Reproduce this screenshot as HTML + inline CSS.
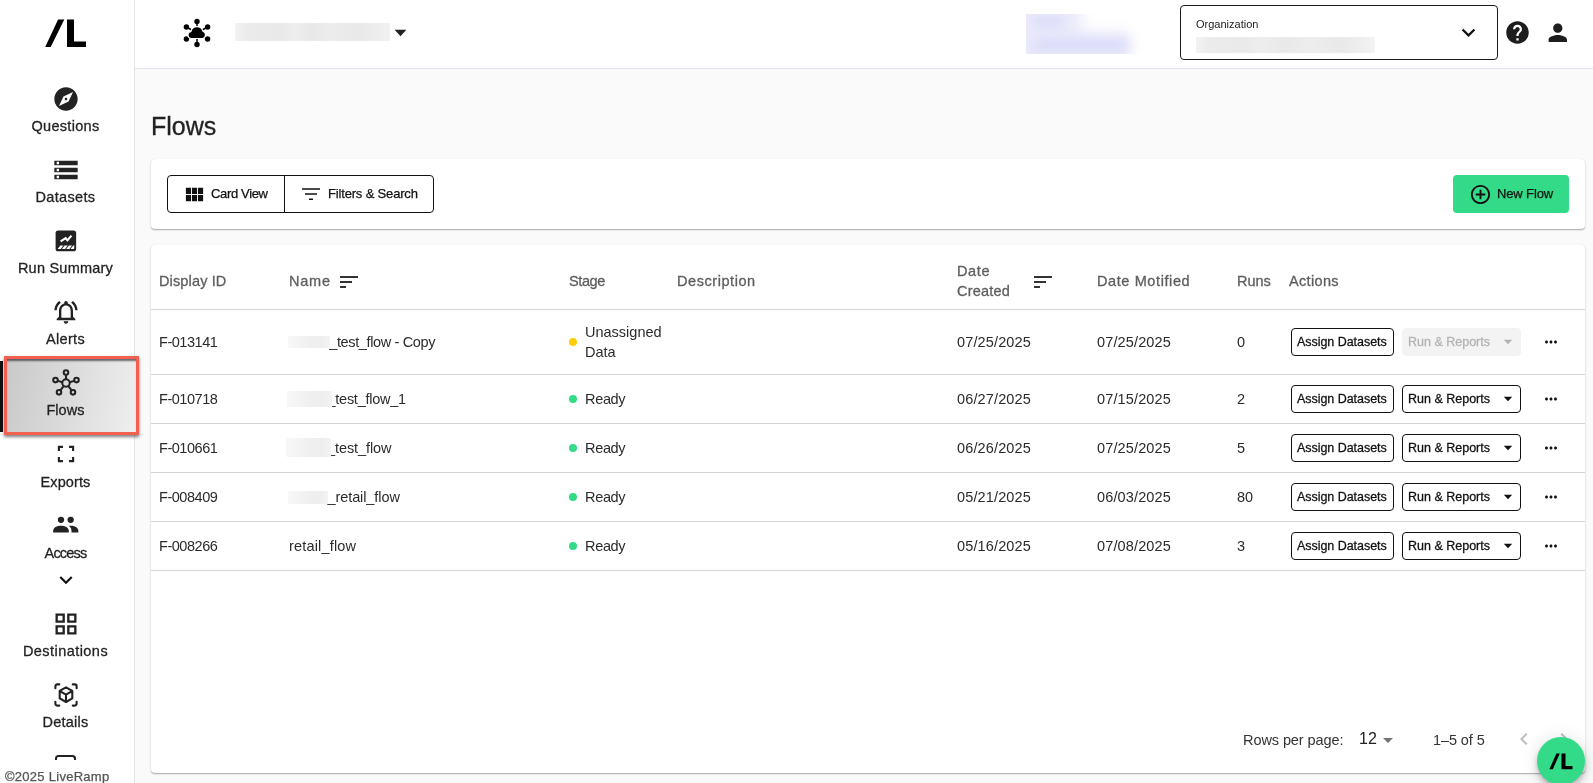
<!DOCTYPE html>
<html lang="en">
<head>
<meta charset="utf-8">
<title>Flows</title>
<style>
*{box-sizing:border-box;margin:0;padding:0}
html,body{width:1593px;height:783px;overflow:hidden;background:#fafafa;font-family:"Liberation Sans",sans-serif;color:#212121}
.abs{position:absolute}
#main,#side,#head{will-change:transform}
#side{position:absolute;left:0;top:0;width:135px;height:783px;background:#fff;border-right:1px solid #e4e4e4}
#head{position:absolute;left:135px;top:0;width:1458px;height:69px;background:#fff;border-bottom:1px solid #e1e4ed}
.nav{position:absolute;left:0;width:131px;text-align:center;font-size:14.5px;color:#222}
.nav svg{position:absolute;left:52px;top:0;width:28px;height:28px;fill:#222}
.nav span{position:absolute;left:0;width:131px;top:32px;line-height:18px;-webkit-text-stroke:.28px #222}
.card{position:absolute;background:#fff;border-radius:4px;box-shadow:0 1px 1.500px rgba(0,0,0,.33),0 0 1px rgba(0,0,0,.1)}
.t{position:absolute;white-space:nowrap;font-size:14.5px;line-height:20px;color:#2b2b2b}
.h{color:#5e5e5e;-webkit-text-stroke:.3px #5e5e5e}
.line{position:absolute;left:151px;width:1434px;height:1px;background:#d4d4d4}
.btn{position:absolute;height:28px;border:1px solid #111;border-radius:4px;font-size:12.5px;line-height:26px;color:#111;white-space:nowrap;background:#fff}
.sb{-webkit-text-stroke:.28px #111}
.dot{position:absolute;width:8px;height:8px;border-radius:50%;background:#33db88}
.blur{position:absolute;background:#ececec;filter:blur(2px);border-radius:2px}
</style>
</head>
<body>
<div id="side">
<svg class="abs" style="left:44px;top:18px" width="44" height="30" viewBox="0 0 44 30"><path d="M14.100 1.600h6.200L6.700 29H1.200z M23 1.600h7v21.900h12v5.500H23z" fill="#000"/></svg>

<div class="nav" style="top:84.7px"><svg viewBox="0 0 24 24"><path d="M12 10.9c-.61 0-1.1.49-1.1 1.1s.49 1.1 1.1 1.1c.61 0 1.1-.49 1.1-1.1s-.49-1.1-1.1-1.1zM12 2C6.48 2 2 6.48 2 12s4.48 10 10 10 10-4.48 10-10S17.52 2 12 2zm2.19 12.19L6 18l3.810-8.190L18 6l-3.810 8.190z"/></svg><span id="n0" style="letter-spacing:0.30px">Questions</span></div>

<div class="nav" style="top:155.8px"><svg viewBox="0 0 24 24"><path d="M2 20h20v-4H2v4zm2-3h2v2H4v-2zM2 4v4h20V4H2zm4 3H4V5h2v2zm-4 7h20v-4H2v4zm2-3h2v2H4v-2z"/></svg><span id="n1" style="letter-spacing:0.34px">Datasets</span></div>

<div class="nav" style="top:226.9px"><svg viewBox="0 0 24 24"><rect x="3.100" y="3.100" width="17.600" height="17.700" rx="2.200"/><path d="M7.400 12.400l4.300-2.900 1.500 1.900 3.500-4" fill="none" stroke="#fff" stroke-width="1.800"/><path d="M4.800 18.800l2.300-2.900h2.700l-2.300 2.900zM8.500 18.800l2.300-2.900h2.700l-2.300 2.900zM12.200 18.800l2.300-2.900h2.700l-2.300 2.900zM15.900 18.800l2.300-2.900h.900v2.300l-.500.600z" fill="#fff"/></svg><span id="n2" style="letter-spacing:0.23px">Run Summary</span></div>

<div class="nav" style="top:298px"><svg viewBox="0 0 24 24"><path d="M12 22c1.1 0 2-.9 2-2h-4c0 1.1.9 2 2 2zm6-6v-5c0-3.070-1.630-5.640-4.500-6.320V4c0-.83-.67-1.500-1.500-1.500s-1.500.67-1.500 1.500v.68C7.640 5.360 6 7.920 6 11v5l-2 2v1h16v-1l-2-2zm-2 1H8v-6c0-2.480 1.510-4.500 4-4.500s4 2.020 4 4.500v6zM7.580 4.080L6.150 2.650C3.750 4.480 2.170 7.300 2.030 10.500h2c.15-2.650 1.510-4.970 3.550-6.420zm12.390 6.420h2c-.15-3.200-1.730-6.020-4.120-7.850l-1.420 1.430c2.020 1.450 3.390 3.770 3.540 6.420z"/></svg><span id="n3" style="letter-spacing:0.36px">Alerts</span></div>

<div class="abs" style="left:0;top:361px;width:3px;height:71px;background:#111"></div>
<div class="abs" style="left:4px;top:356px;width:135px;height:79px;border:3px solid #f4604f;background:linear-gradient(100deg,#c9c9c9 0%,#dcdcdc 50%,#efefef 100%);box-shadow:0 2px 3px rgba(0,0,0,.5),inset 0 3px 2px -1px rgba(0,0,0,.55);z-index:5"></div>
<div class="nav" style="top:369.1px;z-index:6"><svg viewBox="0 0 24 24" style="fill:none" stroke="#222" stroke-width="1.750"><circle cx="12" cy="12" r="3.200"/><circle cx="12" cy="3" r="1.950"/><circle cx="3" cy="9.500" r="1.950"/><circle cx="21" cy="9.500" r="1.950"/><circle cx="6" cy="20" r="1.950"/><circle cx="18" cy="20" r="1.950"/><path d="M12 5.200v3.500M5.100 10.200l3.800 1.200M18.900 10.200l-3.800 1.200M7.300 18.200l2.700-3.600M16.700 18.200l-2.700-3.600"/></svg><span id="n4" style="letter-spacing:0.05px">Flows</span></div>

<div class="nav" style="top:440.2px"><svg viewBox="0 0 24 24"><path d="M5 5h4.400v1.800H6.800v2.600H5zM14.600 5H19v4.400h-1.800V6.800h-2.600zM5 14.600h1.800v2.600h2.600V19H5zM17.200 14.600H19V19h-4.400v-1.800h2.600z"/></svg><span id="n5" style="top:32.600px;letter-spacing:0.10px">Exports</span></div>

<div class="nav" style="top:511.2px"><svg viewBox="0 0 24 24"><circle cx="7.700" cy="7.600" r="2.700"/><circle cx="16" cy="7.600" r="2.700"/><path d="M1 18.400v-1.300c0-3 3.300-4.500 6.700-4.500s6.700 1.500 6.700 4.500v1.300z"/><path d="M16.700 18.400v-1.500c0-1.700-.8-3.100-2.200-4.100.5-.1 1-.2 1.500-.2 3.300 0 6.600 1.500 6.600 4.500v1.300z"/></svg><span id="n6" style="top:32.600px;letter-spacing:-0.80px">Access</span></div>
<svg class="abs" style="left:52.800px;top:567.100px" width="26" height="26" viewBox="0 0 24 24"><path d="M16.590 8.590L12 13.170 7.410 8.590 6 10l6 6 6-6z" fill="#111"/></svg>

<div class="nav" style="top:610px"><svg viewBox="0 0 24 24"><path d="M3 3v8h8V3H3zm6 6H5V5h4v4zm-6 4v8h8v-8H3zm6 6H5v-4h4v4zm4-16v8h8V3h-8zm6 6h-4V5h4v4zm-6 4v8h8v-8h-8zm6 6h-4v-4h4v4z"/></svg><span id="n7" style="letter-spacing:0.45px">Destinations</span></div>

<div class="nav" style="top:681px"><svg viewBox="0 0 24 24" style="fill:none" stroke="#222" stroke-width="1.800" stroke-linecap="round" stroke-linejoin="round"><path d="M2.900 6.200V4.400A1.500 1.500 0 0 1 4.400 2.900H6.200M17.800 2.900h1.800a1.500 1.500 0 0 1 1.500 1.500v1.800M21.100 17.800v1.800a1.500 1.500 0 0 1-1.500 1.500h-1.800M6.200 21.100H4.400a1.500 1.500 0 0 1-1.500-1.500v-1.800"/><path d="M12 5.400l5.400 3.100v6.400L12 18l-5.400-3.100V8.500zM6.800 8.700l5.200 3 5.200-3M12 11.700V18"/></svg><span id="n8" style="letter-spacing:0.27px">Details</span></div>

<div class="abs" style="left:54.800px;top:755px;width:21.600px;height:8px;border:2.500px solid #222;border-bottom:none;border-radius:3.500px 3.500px 0 0"></div>
<div class="abs" style="left:0;top:759.500px;width:134px;height:24px;background:#fff"></div>
<div class="abs" id="foot" style="letter-spacing:0.27px;left:5px;top:769px;font-size:13px;line-height:16px;color:#555;-webkit-text-stroke:.25px #555;white-space:nowrap">©2025 LiveRamp</div>
</div>
<div id="head">
<svg class="abs" style="left:47px;top:18px" width="30" height="30" viewBox="0 0 30 30" fill="#000" stroke="#000"><g stroke-width="1.500"><path d="M15 15V3.500M15 15l9.600-5.500M15 15l9.600 5.500M15 15v11.500M15 15l-9.600 5.500M15 15L5.400 9.500"/></g><g stroke="none"><circle cx="15" cy="3.500" r="2.700"/><circle cx="25.600" cy="9" r="2.700"/><circle cx="25.600" cy="21" r="2.700"/><circle cx="15" cy="26.500" r="2.700"/><circle cx="4.400" cy="21" r="2.700"/><circle cx="4.400" cy="9" r="2.700"/><path d="M9.500 20.500a3.500 3.500 0 0 1-.6-6.950 6.200 6.200 0 0 1 12-.400 3.800 3.800 0 0 1-.400 7.350z" stroke="#fff" stroke-width="1.200"/></g></svg>
<div class="abs" style="left:99.700px;top:23px;width:155.300px;height:17.700px;background:linear-gradient(90deg,#f3f3f3 0%,#ebebeb 8%,#e9e9e9 30%,#eeeeee 38%,#e8e8e8 50%,#ececec 62%,#e9e9e9 80%,#eeeeee 94%,#f2f2f2 100%)"></div>
<svg class="abs" style="left:259px;top:29px" width="13" height="8" viewBox="0 0 13 8"><path d="M.6.800h11.800L6.500 7.200z" fill="#222"/></svg>
<div class="abs" style="left:891px;top:14px;width:126px;height:40px;overflow:hidden">
<div class="abs" style="left:-14px;top:-12px;width:70px;height:64px;background:#ebebfb;filter:blur(7px)"></div>
<div class="abs" style="left:-8px;top:18px;width:112px;height:34px;background:#ebebfb;filter:blur(7px)"></div>
<div class="abs" style="left:7px;top:2px;width:30px;height:11px;background:#dcdcf9;filter:blur(5px)"></div>
<div class="abs" style="left:7px;top:25px;width:94px;height:12px;background:#d9d9f9;filter:blur(6px)"></div>
</div>
<div class="abs" style="left:1045px;top:5px;width:318px;height:55px;border:1px solid #1a1a1a;border-radius:4px"></div>
<div class="abs" id="org" style="left:1061px;top:17px;font-size:11px;line-height:14px;color:#222">Organization</div>
<div class="abs" style="left:1061px;top:37px;width:179px;height:15.600px;background:linear-gradient(90deg,#f2f2f2 0%,#ebebeb 8%,#eaeaea 28%,#eeeeee 36%,#e9e9e9 50%,#ededed 64%,#e9e9e9 82%,#efefef 93%,#f4f4f4 100%)"></div>
<svg class="abs" style="left:1320px;top:19px" width="27" height="27" viewBox="0 0 24 24"><path d="M16.590 8.590L12 13.170 7.410 8.590 6 10l6 6 6-6z" fill="#111"/></svg>
<svg class="abs" style="left:1369px;top:19px" width="27" height="27" viewBox="0 0 24 24"><path d="M12 2C6.480 2 2 6.480 2 12s4.480 10 10 10 10-4.480 10-10S17.520 2 12 2zm1 17h-2v-2h2v2zm2.070-7.750l-.9.920C13.450 12.900 13 13.500 13 15h-2v-.5c0-1.100.45-2.100 1.170-2.830l1.240-1.260c.37-.36.59-.86.59-1.410 0-1.100-.9-2-2-2s-2 .9-2 2H8c0-2.210 1.790-4 4-4s4 1.790 4 4c0 .88-.36 1.680-.93 2.250z" fill="#1e1e1e"/></svg>
<svg class="abs" style="left:1409px;top:19px" width="27.600" height="27.600" viewBox="0 0 24 24"><path d="M12 12c2.210 0 4-1.790 4-4s-1.790-4-4-4-4 1.790-4 4 1.790 4 4 4zm0 2c-2.670 0-8 1.340-8 4v2h16v-2c0-2.660-5.330-4-8-4z" fill="#1e1e1e"/></svg>
</div>
<div id="main">
<div class="t" id="title" style="left:151px;top:110px;font-size:25px;line-height:32px;color:#222;-webkit-text-stroke:.3px #222">Flows</div>
<div class="card" style="left:151px;top:159px;width:1434px;height:70px"></div>
<div class="abs" style="left:167px;top:175px;width:267px;height:38px;border:1px solid #111;border-radius:4px"></div>
<div class="abs" style="left:284px;top:175px;width:1px;height:38px;background:#111"></div>
<svg class="abs" style="left:183px;top:183px" width="23" height="23" viewBox="0 0 24 24"><path d="M14.670 5v6.500H9.330V5h5.340zm1 6.500H21V5h-5.330v6.500zm-1 7.500v-6.500H9.330V19h5.340zm1-6.500V19H21v-6.500h-5.330zm-7.340 0H3V19h5.330v-6.500zm0-1V5H3v6.500h5.330z" fill="#111"/></svg>
<div class="t" id="cv" style="left:211px;top:184px;font-size:13px;color:#111;-webkit-text-stroke:.25px #111;letter-spacing:-0.34px">Card View</div>
<svg class="abs" style="left:299px;top:182px" width="24" height="24" viewBox="0 0 24 24"><path d="M10 18h4v-1.600h-4V18zM3 6.200v1.500h18V6.200H3zm3 6.500h12v-1.500H6v1.500z" fill="#111"/></svg>
<div class="t" id="fs" style="left:328px;top:184px;font-size:13px;color:#111;-webkit-text-stroke:.25px #111;letter-spacing:-0.17px">Filters &amp; Search</div>
<div class="abs" style="left:1453px;top:175px;width:116px;height:38px;background:#33db88;border-radius:4px"></div>
<svg class="abs" style="left:1469px;top:182.500px" width="23" height="23" viewBox="0 0 24 24"><path d="M13 7h-2v4H7v2h4v4h2v-4h4v-2h-4V7zm-1-5C6.480 2 2 6.480 2 12s4.480 10 10 10 10-4.480 10-10S17.520 2 12 2zm0 18c-4.410 0-8-3.590-8-8s3.590-8 8-8 8 3.590 8 8-3.590 8-8 8z" fill="#111"/></svg>
<div class="t" id="nf" style="left:1497px;top:184px;font-size:13px;color:#111;-webkit-text-stroke:.25px #111;letter-spacing:-0.13px">New Flow</div>
<div class="card" style="left:151px;top:245px;width:1434px;height:528px"></div>
<div class="t h" id="h1" style="left:159px;top:271px;letter-spacing:0.14px">Display ID</div>
<div class="t h" id="h2" style="left:289px;top:271px;letter-spacing:0.77px">Name</div>
<div class="t h" id="h3" style="left:569px;top:271px;letter-spacing:-0.40px">Stage</div>
<div class="t h" id="h4" style="left:677px;top:271px;letter-spacing:0.56px">Description</div>
<div class="t h" id="h5" style="left:1097px;top:271px;letter-spacing:0.60px">Date Motified</div>
<div class="t h" id="h6" style="left:1237px;top:271px">Runs</div>
<div class="t h" id="h7" style="left:1289px;top:271px;letter-spacing:0.34px">Actions</div>
<div class="t h" id="h8" style="left:957px;top:261px;letter-spacing:0.63px">Date</div>
<div class="t h" id="h9" style="left:957px;top:281px;letter-spacing:0.20px">Created</div>
<svg class="abs" style="left:337.3px;top:269.5px" width="24" height="24" viewBox="0 0 24 24"><path d="M3 18h6v-2H3v2zM3 6v2h18V6H3zm0 7h12v-2H3v2z" fill="#333"/></svg>
<svg class="abs" style="left:1031.4px;top:269.5px" width="24" height="24" viewBox="0 0 24 24"><path d="M3 18h6v-2H3v2zM3 6v2h18V6H3zm0 7h12v-2H3v2z" fill="#333"/></svg>
<div class="line" style="top:309px"></div>
<div class="line" style="top:374px"></div>
<div class="line" style="top:423px"></div>
<div class="line" style="top:472px"></div>
<div class="line" style="top:521px"></div>
<div class="line" style="top:570px"></div>
<div class="t" id="r0a" style="left:159px;top:332px;letter-spacing:-0.46px">F-013141</div>
<div class="t" id="r0b" style="left:329.2px;top:332px;letter-spacing:-0.36px">_test_flow - Copy</div>
<div class="abs" style="left:287.5px;top:336px;width:42.2px;height:12px;background:linear-gradient(90deg,#f8f8f8,#efefef 55%,#eeeeee 80%,#f3f3f3)"></div>
<div class="dot" style="left:569px;top:338px;background:#ffcd0a"></div>
<div class="t" id="r0c" style="left:585px;top:322px">Unassigned</div>
<div class="t" id="r0c2" style="left:585px;top:342px">Data</div>
<div class="t" id="r0d" style="left:957px;top:332px;letter-spacing:0.14px">07/25/2025</div>
<div class="t" id="r0e" style="left:1097px;top:332px;letter-spacing:0.14px">07/25/2025</div>
<div class="t" id="r0f" style="left:1237px;top:332px">0</div>
<div class="btn" style="left:1291px;top:328px;width:103px;padding-left:5px"><span class="sb" id="r0g" style="letter-spacing:-0.04px">Assign Datasets</span></div>
<div class="btn" style="left:1402px;top:328px;width:119px;padding-left:5px;border-color:#f3f3f3;background:#f3f3f3;color:#b3b3b3"><span class="sb" id="r0h" style="-webkit-text-stroke-color:#b3b3b3">Run &amp; Reports</span></div>
<svg class="abs" style="left:1503px;top:339px" width="10" height="6" viewBox="0 0 10 6"><path d="M.8.800h8.400L5 5.200z" fill="#b3b3b3"/></svg>
<svg class="abs" style="left:1542px;top:333px" width="18" height="18" viewBox="0 0 24 24"><path d="M6 10c-1.100 0-2 .9-2 2s.9 2 2 2 2-.9 2-2-.9-2-2-2zm12 0c-1.100 0-2 .9-2 2s.9 2 2 2 2-.9 2-2-.9-2-2-2zm-6 0c-1.100 0-2 .9-2 2s.9 2 2 2 2-.9 2-2-.9-2-2-2z" fill="#111"/></svg>
<div class="t" id="r1a" style="left:159px;top:389px;letter-spacing:-0.46px">F-010718</div>
<div class="t" id="r1b" style="left:327.5px;top:389px;letter-spacing:-0.26px">_test_flow_1</div>
<div class="abs" style="left:287.2px;top:391px;width:44.4px;height:16px;background:linear-gradient(90deg,#f8f8f8,#efefef 55%,#eeeeee 80%,#f3f3f3)"></div>
<div class="dot" style="left:569px;top:395px;background:#33db88"></div>
<div class="t" id="r1c" style="left:585px;top:389px;letter-spacing:-0.33px">Ready</div>
<div class="t" id="r1d" style="left:957px;top:389px;letter-spacing:0.14px">06/27/2025</div>
<div class="t" id="r1e" style="left:1097px;top:389px;letter-spacing:0.14px">07/15/2025</div>
<div class="t" id="r1f" style="left:1237px;top:389px">2</div>
<div class="btn" style="left:1291px;top:385px;width:103px;padding-left:5px"><span class="sb" id="r1g" style="letter-spacing:-0.04px">Assign Datasets</span></div>
<div class="btn" style="left:1402px;top:385px;width:119px;padding-left:5px"><span class="sb" id="r1h" style="">Run &amp; Reports</span></div>
<svg class="abs" style="left:1503px;top:396px" width="10" height="6" viewBox="0 0 10 6"><path d="M.8.800h8.400L5 5.200z" fill="#111"/></svg>
<svg class="abs" style="left:1542px;top:390px" width="18" height="18" viewBox="0 0 24 24"><path d="M6 10c-1.100 0-2 .9-2 2s.9 2 2 2 2-.9 2-2-.9-2-2-2zm12 0c-1.100 0-2 .9-2 2s.9 2 2 2 2-.9 2-2-.9-2-2-2zm-6 0c-1.100 0-2 .9-2 2s.9 2 2 2 2-.9 2-2-.9-2-2-2z" fill="#111"/></svg>
<div class="t" id="r2a" style="left:159px;top:438px;letter-spacing:-0.46px">F-010661</div>
<div class="t" id="r2b" style="left:327px;top:438px;letter-spacing:-0.08px">_test_flow</div>
<div class="abs" style="left:286px;top:438px;width:45px;height:18.5px;background:linear-gradient(90deg,#f8f8f8,#efefef 55%,#eeeeee 80%,#f3f3f3)"></div>
<div class="dot" style="left:569px;top:444px;background:#33db88"></div>
<div class="t" id="r2c" style="left:585px;top:438px;letter-spacing:-0.33px">Ready</div>
<div class="t" id="r2d" style="left:957px;top:438px;letter-spacing:0.14px">06/26/2025</div>
<div class="t" id="r2e" style="left:1097px;top:438px;letter-spacing:0.14px">07/25/2025</div>
<div class="t" id="r2f" style="left:1237px;top:438px">5</div>
<div class="btn" style="left:1291px;top:434px;width:103px;padding-left:5px"><span class="sb" id="r2g" style="letter-spacing:-0.04px">Assign Datasets</span></div>
<div class="btn" style="left:1402px;top:434px;width:119px;padding-left:5px"><span class="sb" id="r2h" style="">Run &amp; Reports</span></div>
<svg class="abs" style="left:1503px;top:445px" width="10" height="6" viewBox="0 0 10 6"><path d="M.8.800h8.400L5 5.200z" fill="#111"/></svg>
<svg class="abs" style="left:1542px;top:439px" width="18" height="18" viewBox="0 0 24 24"><path d="M6 10c-1.100 0-2 .9-2 2s.9 2 2 2 2-.9 2-2-.9-2-2-2zm12 0c-1.100 0-2 .9-2 2s.9 2 2 2 2-.9 2-2-.9-2-2-2zm-6 0c-1.100 0-2 .9-2 2s.9 2 2 2 2-.9 2-2-.9-2-2-2z" fill="#111"/></svg>
<div class="t" id="r3a" style="left:159px;top:487px;letter-spacing:-0.46px">F-008409</div>
<div class="t" id="r3b" style="left:327.5px;top:487px;letter-spacing:-0.09px">_retail_flow</div>
<div class="abs" style="left:288px;top:491px;width:39.5px;height:12.7px;background:linear-gradient(90deg,#f8f8f8,#efefef 55%,#eeeeee 80%,#f3f3f3)"></div>
<div class="dot" style="left:569px;top:493px;background:#33db88"></div>
<div class="t" id="r3c" style="left:585px;top:487px;letter-spacing:-0.33px">Ready</div>
<div class="t" id="r3d" style="left:957px;top:487px;letter-spacing:0.14px">05/21/2025</div>
<div class="t" id="r3e" style="left:1097px;top:487px;letter-spacing:0.14px">06/03/2025</div>
<div class="t" id="r3f" style="left:1237px;top:487px">80</div>
<div class="btn" style="left:1291px;top:483px;width:103px;padding-left:5px"><span class="sb" id="r3g" style="letter-spacing:-0.04px">Assign Datasets</span></div>
<div class="btn" style="left:1402px;top:483px;width:119px;padding-left:5px"><span class="sb" id="r3h" style="">Run &amp; Reports</span></div>
<svg class="abs" style="left:1503px;top:494px" width="10" height="6" viewBox="0 0 10 6"><path d="M.8.800h8.400L5 5.200z" fill="#111"/></svg>
<svg class="abs" style="left:1542px;top:488px" width="18" height="18" viewBox="0 0 24 24"><path d="M6 10c-1.100 0-2 .9-2 2s.9 2 2 2 2-.9 2-2-.9-2-2-2zm12 0c-1.100 0-2 .9-2 2s.9 2 2 2 2-.9 2-2-.9-2-2-2zm-6 0c-1.100 0-2 .9-2 2s.9 2 2 2 2-.9 2-2-.9-2-2-2z" fill="#111"/></svg>
<div class="t" id="r4a" style="left:159px;top:536px;letter-spacing:-0.46px">F-008266</div>
<div class="t" id="r4b" style="left:289px;top:536px;letter-spacing:0.17px">retail_flow</div>
<div class="dot" style="left:569px;top:542px;background:#33db88"></div>
<div class="t" id="r4c" style="left:585px;top:536px;letter-spacing:-0.33px">Ready</div>
<div class="t" id="r4d" style="left:957px;top:536px;letter-spacing:0.14px">05/16/2025</div>
<div class="t" id="r4e" style="left:1097px;top:536px;letter-spacing:0.14px">07/08/2025</div>
<div class="t" id="r4f" style="left:1237px;top:536px">3</div>
<div class="btn" style="left:1291px;top:532px;width:103px;padding-left:5px"><span class="sb" id="r4g" style="letter-spacing:-0.04px">Assign Datasets</span></div>
<div class="btn" style="left:1402px;top:532px;width:119px;padding-left:5px"><span class="sb" id="r4h" style="">Run &amp; Reports</span></div>
<svg class="abs" style="left:1503px;top:543px" width="10" height="6" viewBox="0 0 10 6"><path d="M.8.800h8.400L5 5.200z" fill="#111"/></svg>
<svg class="abs" style="left:1542px;top:537px" width="18" height="18" viewBox="0 0 24 24"><path d="M6 10c-1.100 0-2 .9-2 2s.9 2 2 2 2-.9 2-2-.9-2-2-2zm12 0c-1.100 0-2 .9-2 2s.9 2 2 2 2-.9 2-2-.9-2-2-2zm-6 0c-1.100 0-2 .9-2 2s.9 2 2 2 2-.9 2-2-.9-2-2-2z" fill="#111"/></svg>
<div class="t" id="p1" style="left:1243px;top:730px;color:#333;letter-spacing:-0.08px">Rows per page:</div>
<div class="t" id="p2" style="left:1359px;top:729px;font-size:16px;color:#222">12</div>
<svg class="abs" style="left:1375.500px;top:728px" width="24" height="24" viewBox="0 0 24 24"><path d="M7 10l5 5 5-5z" fill="#757575"/></svg>
<div class="t" id="p3" style="left:1433px;top:730px;color:#333;letter-spacing:-0.09px">1–5 of 5</div>
<svg class="abs" style="left:1512px;top:727px" width="24" height="24" viewBox="0 0 24 24"><path d="M15.410 7.410L14 6l-6 6 6 6 1.410-1.410L10.830 12z" fill="#bdbdbd"/></svg>
<svg class="abs" style="left:1552px;top:727px" width="24" height="24" viewBox="0 0 24 24"><path d="M10 6L8.590 7.410 13.170 12l-4.580 4.590L10 18l6-6z" fill="#bdbdbd"/></svg>
<div class="abs" style="left:1537px;top:737.200px;width:48.200px;height:48.200px;border-radius:50%;background:#33db88;box-shadow:0 3px 5px -1px rgba(0,0,0,.2),0 6px 10px rgba(0,0,0,.14),0 1px 18px rgba(0,0,0,.12)"></div>
<svg class="abs" style="left:1549px;top:753px" width="25" height="17" viewBox="0 0 25 17"><path d="M7.400.5h3.400L3.800 16.300H.4z M12.500.5h4v12.600h7v3.200h-11z" fill="#000"/></svg>
</div>
</body>
</html>
